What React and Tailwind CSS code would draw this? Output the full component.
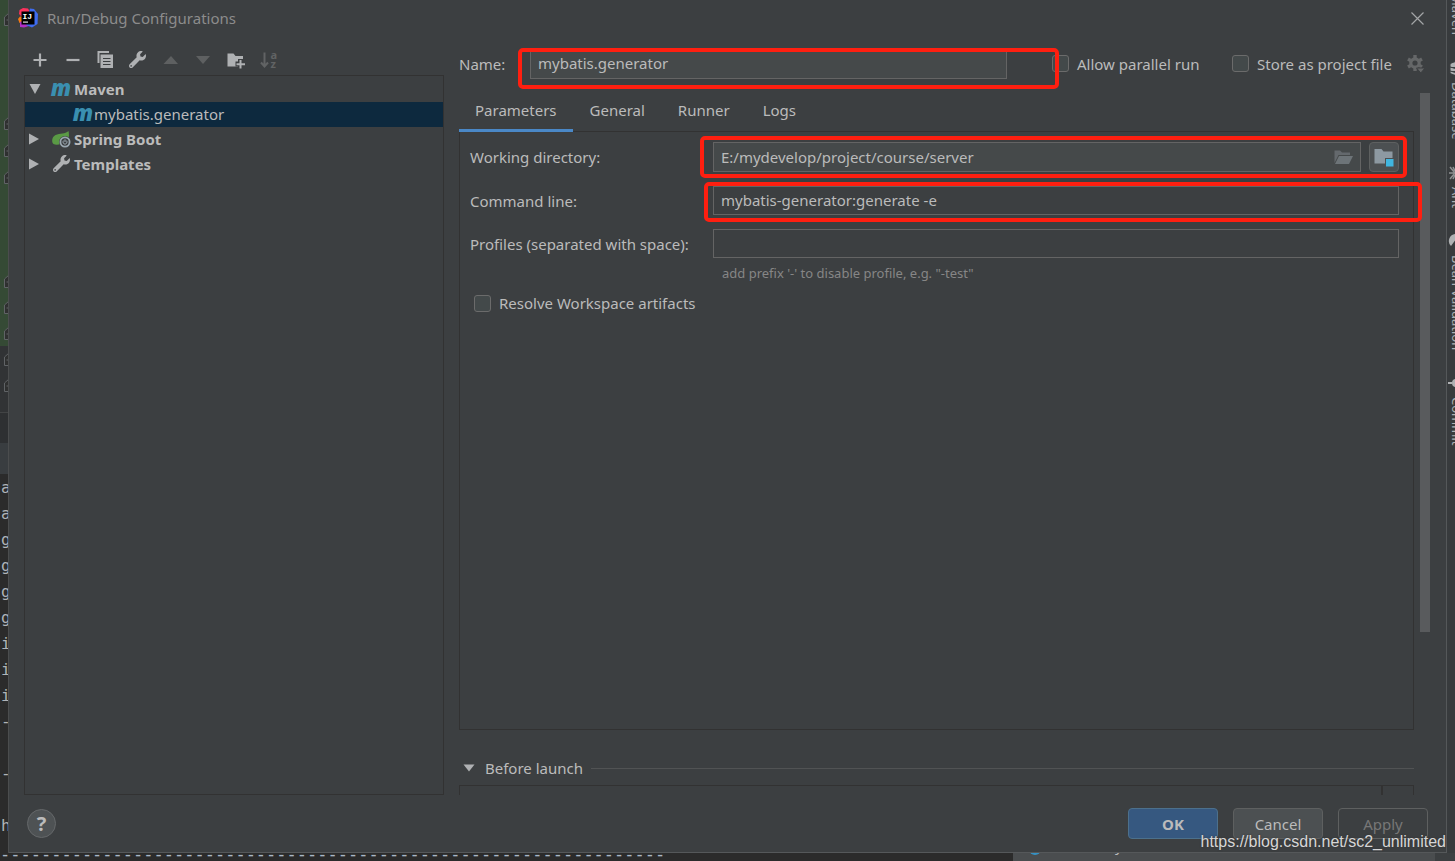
import React, { useState } from "react";
import { FaWrench } from "react-icons/fa";

const consoleLines = ["a", "a", "g", "g", "g", "g", "i", "i", "i", "-", "", "-", "", "h"];
const foldMarks = [13, 117, 144, 171, 275, 301, 327, 353, 379];
const tabs = ["Parameters", "General", "Runner", "Logs"];

function AppLogo() {
  return (
    <svg width="20" height="20" viewBox="0 0 20 20" aria-hidden="true">
      <path d="M1.500 2L5 0L10 0.500L12 4L10 8L4 9L1 6Z" fill="#fe315d" />
      <path d="M0 11L2 8.500L5 9L6 14L1.500 15Z" fill="#f97a12" />
      <path d="M2 14L10 11L11 18L6 19.500L2 19Z" fill="#b02fc4" />
      <path d="M12 0.500L16 1L20 6L19.500 16L14 19.500L8 17L11 4Z" fill="#3f6cf0" />
      <rect x="3.500" y="3.500" width="13" height="13" fill="#000" />
      <text x="4.500" y="10.500" fill="#fff" fontSize="8" fontWeight="700" fontFamily="Liberation Mono, monospace">IJ</text>
      <rect x="5" y="13.500" width="5" height="1.200" fill="#ddd" />
    </svg>
  );
}

function MavenIcon() {
  return (
    <span aria-hidden="true" className="flex h-5 w-5 items-center justify-center pb-1 font-['Open_Sans',sans-serif] text-[22px] leading-4 font-extrabold text-[#3a8fb0] italic">
      m
    </span>
  );
}

function SpringIcon() {
  return (
    <svg width="20" height="18" viewBox="0 0 20 18" aria-hidden="true">
      <path d="M17.500 1C18.500 6 18 9 15 11C10 15 5 15.500 2.500 14C0.500 12.500 0.500 7 4.500 5C9 3 14 4.500 17.500 1Z" fill="#5a9a45" />
      <circle cx="14" cy="12" r="6" fill="#3c3f41" />
      <circle cx="14" cy="12" r="4.600" fill="none" stroke="#9aa7b0" strokeWidth="1.800" />
      <path d="M12.800 10.500A2 2 0 1 0 15.200 10.500M14 9.300V12" fill="none" stroke="#9aa7b0" strokeWidth="1" />
    </svg>
  );
}

const toolbar = [
  { label: "Add", icon: <path d="M9 2.500V15.500M2.500 9H15.500" stroke="#afb1b3" strokeWidth="2.200" /> },
  { label: "Remove", icon: <path d="M2.500 9H15.500" stroke="#afb1b3" strokeWidth="2.200" /> },
  {
    label: "Copy",
    icon: (
      <>
        <path d="M1.500 12V1H12" fill="none" stroke="#afb1b3" strokeWidth="2" />
        <rect x="3.500" y="3.500" width="12.500" height="13.500" fill="#afb1b3" />
        <path d="M6 7.500H13.500M6 10.500H13.500M6 13.500H13.500" stroke="#3c3f41" strokeWidth="1.200" />
      </>
    ),
  },
  { label: "Edit templates", icon: <FaWrench size={17} color="#afb1b3" /> },
  { label: "Move up", icon: <path d="M1.500 13L9 5L16 13Z" fill="#5e6061" /> },
  { label: "Move down", icon: <path d="M2 5H16L9 13Z" fill="#5e6061" /> },
  {
    label: "Create folder",
    icon: (
      <>
        <path d="M0.500 2.500H6.500L8.500 5H16V15.500H0.500Z" fill="#afb1b3" />
        <path d="M13.500 8V18M8.500 13H18" stroke="#3c3f41" strokeWidth="5" />
        <path d="M13.500 9V17.500M9.500 13.200H18" stroke="#afb1b3" strokeWidth="2" />
      </>
    ),
  },
  {
    label: "Sort configurations",
    icon: (
      <>
        <path d="M4.500 1.500V15M1 11.500L4.500 15.500L8 11.500" fill="none" stroke="#616364" strokeWidth="2" />
        <text x="10.500" y="7.500" fontSize="11" fontWeight="700" fill="#616364">
          a<tspan x="10.500" dy="9.500">z</tspan>
        </text>
      </>
    ),
  },
];

function ToolButton({ label, icon }) {
  return (
    <button type="button" aria-label={label} className="flex h-6 items-center justify-center">
      <svg width="18" height="18" viewBox="0 0 18 18" overflow="visible" aria-hidden="true">{icon}</svg>
    </button>
  );
}

function Arrow({ open }) {
  return (
    <svg width="12" height="12" viewBox="0 0 12 12" aria-hidden="true">
      <path d={open ? "M0.500 1H11.500L6 11Z" : "M0 0.500L10 6L0 11.500Z"} fill="#afb1b3" />
    </svg>
  );
}

function TreeRow({ open, icon, children }) {
  return (
    <li className="flex h-[25px] items-center pb-[2px] pl-1 font-bold">
      <Arrow open={open} />
      <span className="ml-2 flex w-6 items-center justify-center">{icon}</span>
      <span className="ml-px">{children}</span>
    </li>
  );
}

function Check({ id, labelWidth = "", children }) {
  return (
    <div className="flex shrink-0 items-center gap-2">
      <input id={id} type="checkbox" className="h-[17px] w-[17px] appearance-none rounded-[3px] border border-[#6b6b6b] bg-[#43494a] checked:bg-[#4a88c7]" />
      <label htmlFor={id} className={labelWidth}>{children}</label>
    </div>
  );
}

function LeftEdge() {
  return (
    <div className="flex w-[9px] shrink-0 flex-col overflow-hidden border-r border-[#4b4d4e]">
      <div className="h-[413px] shrink-0 bg-[#313335]">
        <svg width="9" height="413" viewBox="0 0 9 413" aria-hidden="true">
          <rect width="9" height="346" fill="#354a35" />
          {foldMarks.map((y) => (
            <path key={y} d={`M9 ${y}L4.500 ${y + 4}V${y + 12.5}H9M6.500 ${y + 7}H9`} fill="#2f3030" stroke="#606366" />
          ))}
          <path d="M0 412.500H9" stroke="#424445" />
        </svg>
      </div>
      <div className="h-[30px] shrink-0 bg-[#2e3032]" />
      <div className="h-8 shrink-0 border-b border-[#2b2b2b] bg-[#393d40]" />
      <div className="flex-1 bg-[#2b2b2b] pl-px font-['DejaVu_Sans_Mono',monospace] text-[16px] leading-[26px] text-[#b0b4b8]">
        {consoleLines.map((c, i) => (
          <div key={i} className="h-[26px]">{c}</div>
        ))}
      </div>
    </div>
  );
}

const sideTools = [
  { name: "Maven", icon: null },
  { name: "Database", icon: <path d="M2 3C6 0 10 0 14 3V12C10 15 6 15 2 12ZM2 6Q8 9 14 6M2 10Q8 13 14 10" fill="#afb1b3" stroke="#3c3f41" /> },
  { name: "Ant", icon: <path d="M2 1L7 7L2 13M1 7H8M5 1L7 5M5 13L7 9" fill="none" stroke="#8f9193" strokeWidth="1.500" /> },
  { name: "Bean Validation", icon: <path d="M8 0A7 7 0 0 0 3 12L8 5Z" fill="#afb1b3" /> },
  { name: "Commit", icon: <path d="M0 7H4M8 4A3 3 0 0 0 8 10Z" fill="#afb1b3" stroke="#afb1b3" strokeWidth="2" /> },
];

function RightEdge() {
  return (
    <div className="flex w-2 shrink-0 flex-col gap-[26px] overflow-hidden bg-[#383b3d] text-[13px] leading-5 text-[#afb1b3]">
      {sideTools.map((t, i) => (
        <div key={t.name} className={i === 0 ? "-mt-[6px] shrink-0" : "flex shrink-0 flex-col items-start gap-[7px]"}>
          {t.icon && <svg className="ml-px shrink-0" width="14" height="14" viewBox="0 0 14 14" aria-hidden="true">{t.icon}</svg>}
          <span className="block [writing-mode:vertical-rl]">{t.name}</span>
        </div>
      ))}
    </div>
  );
}

const field = "w-full min-w-0 border border-[#646464] px-[7px] pb-[2px] text-[#bbbbbb] outline-none";
const highlight = "pointer-events-none absolute rounded-[5px] border-4 border-[#ff1f10]";

export default function App() {
  const [tab, setTab] = useState("Parameters");
  return (
    <div className="relative flex h-screen flex-col overflow-hidden bg-[#2b2b2b] font-['Noto_Sans','Open_Sans',sans-serif] text-[15px] leading-5 text-[#bbbbbb]">
      <div className="flex min-h-0 flex-1">
        <LeftEdge />
        <main className="flex min-w-0 flex-1 flex-col border-r border-b border-[#55585a] bg-[#3c3f41]">
          <header className="flex h-9 shrink-0 items-center pr-[22px] pl-[9px]">
            <AppLogo />
            <h1 className="ml-[9px] flex-1 text-[#8c8c8c]">Run/Debug Configurations</h1>
            <button type="button" aria-label="Close">
              <svg width="13" height="13" viewBox="0 0 13 13" aria-hidden="true">
                <path d="M0.500 0.500L12.500 12.500M12.500 0.500L0.500 12.500" stroke="#a3a5a6" strokeWidth="1.200" />
              </svg>
            </button>
          </header>

          <div className="flex min-h-0 flex-1 pr-4 pl-[15px]">
            <aside className="flex w-[420px] shrink-0 flex-col pt-3">
              <div className="grid h-[27px] w-[261px] shrink-0 grid-cols-8">
                {toolbar.map((t) => <ToolButton key={t.label} {...t} />)}
              </div>
              <ul className="flex-1 border border-[#323232] pt-px">
                <TreeRow open icon={<MavenIcon />}>Maven</TreeRow>
                <li className="flex h-[25px] items-center bg-[#0d293e] pb-[2px] pl-12">
                  <MavenIcon />
                  <span className="ml-px">mybatis.generator</span>
                </li>
                <TreeRow icon={<SpringIcon />}>Spring Boot</TreeRow>
                <TreeRow icon={<FaWrench size={17} color="#afb1b3" />}>Templates</TreeRow>
              </ul>
            </aside>

            <section className="ml-[15px] flex min-w-0 flex-1 flex-col">
              <div className="flex h-[55px] shrink-0 items-center pr-[5px]">
                <label htmlFor="name" className="w-[71px] shrink-0">Name:</label>
                <div className="relative mr-[45px] flex-1">
                  <input id="name" defaultValue="mybatis.generator" className={`${field} h-[30px] bg-[#45494a]`} />
                  <div className={`${highlight} -top-px -right-[52px] -bottom-[10px] -left-3`} />
                </div>
                <Check id="parallel" labelWidth="w-[127px]">Allow parallel run</Check>
                <div className="ml-7 flex shrink-0 items-center gap-2">
                  <Check id="store" labelWidth="w-[142px]">Store as project file</Check>
                  <button type="button" aria-label="Storage options">
                    <svg width="18" height="18" viewBox="0 0 18 18" aria-hidden="true">
                      <circle cx="8" cy="8" r="4.200" fill="none" stroke="#656768" strokeWidth="3.200" />
                      <path d="M8 0V3M8 13V16M1 4L3.600 5.500M12.400 10.500L15 12M1 12L3.600 10.500M12.400 5.500L15 4" stroke="#656768" strokeWidth="3.400" />
                      <path d="M9.500 13H18L13.800 18Z" fill="#656768" stroke="#3c3f41" />
                    </svg>
                  </button>
                </div>
              </div>

              <div className="flex min-h-0 flex-1">
                <div className="flex min-w-0 flex-1 flex-col">
                  <div role="tablist" className="flex h-10 shrink-0 gap-px">
                    {tabs.map((t) => (
                      <button
                        key={t}
                        type="button"
                        role="tab"
                        aria-selected={tab === t}
                        onClick={() => setTab(t)}
                        className={tab === t ? "z-10 -mb-px border-b-[3px] border-[#4a88c7] px-4" : "border-b-2 border-transparent px-4"}
                      >
                        {t}
                      </button>
                    ))}
                  </div>
                  <div role="tabpanel" className="min-h-0 flex-1 border border-[#323232] pt-[10px] pr-[14px] pl-[10px]">
                    <div className="grid grid-cols-[243px_1fr] items-center gap-y-[14px]">
                      <label htmlFor="dir">Working directory:</label>
                      <div className="relative flex gap-2">
                        <div className="flex h-[30px] min-w-0 flex-1 items-center border border-[#646464] bg-[#45494a] pr-[7px]">
                          <input id="dir" defaultValue="E:/mydevelop/project/course/server" className="min-w-0 flex-1 bg-transparent px-[7px] text-[#bbbbbb] outline-none" />
                          <button type="button" aria-label="Browse">
                            <svg width="19" height="14" viewBox="0 0 19 14" aria-hidden="true">
                              <path d="M0.500 13V0.500H6L8 2.500H16V5H4.500Z" fill="#64696d" />
                              <path d="M5 6H19L15 14H1Z" fill="#6d7478" />
                            </svg>
                          </button>
                        </div>
                        <button type="button" aria-label="Select module directory" className="flex h-[30px] w-[30px] items-center justify-center rounded-[4px] border border-[#5e6060] bg-[#4c5052]">
                          <svg width="20" height="19" viewBox="0 0 20 19" aria-hidden="true">
                            <path d="M0.500 1H7.500L9.500 3.500H18.500V10H11V15.500H0.500Z" fill="#8d99a2" />
                            <rect x="12" y="11" width="7.500" height="7.500" fill="#40b6e0" />
                          </svg>
                        </button>
                        <div className={`${highlight} -top-[6px] -right-2 -bottom-[6px] -left-[13px]`} />
                      </div>
                      <label htmlFor="cmd">Command line:</label>
                      <div className="relative">
                        <input id="cmd" defaultValue="mybatis-generator:generate -e" className={`${field} h-[29px] bg-transparent`} />
                        <div className={`${highlight} -top-1 -right-[23px] -bottom-[7px] -left-[9px] z-10`} />
                      </div>
                      <label htmlFor="profiles">Profiles (separated with space):</label>
                      <input id="profiles" className={`${field} h-[29px] bg-transparent`} />
                    </div>
                    <p className="mt-[5px] pl-[252px] text-[13px] text-[#868686]">add prefix &#39;-&#39; to disable profile, e.g. &quot;-test&quot;</p>
                    <div className="mt-[10px] pl-1">
                      <Check id="resolve">Resolve Workspace artifacts</Check>
                    </div>
                  </div>
                  <div className="mt-7 flex shrink-0 items-center pl-1">
                    <svg width="12" height="8" viewBox="0 0 12 8" aria-hidden="true">
                      <path d="M0.500 0.500H11.500L6 7.500Z" fill="#afb1b3" />
                    </svg>
                    <h2 className="mr-2 ml-[10px]">Before launch</h2>
                    <div className="h-px flex-1 bg-[#515354]" />
                  </div>
                  <div className="mt-[7px] flex h-[10px] shrink-0 justify-end border border-b-0 border-[#323232]">
                    <div className="w-8 border-l-2 border-[#323232]" />
                  </div>
                </div>
                <div className="w-4 shrink-0 pt-[2px] pl-[6px]">
                  <div className="h-[539px] w-[10px] bg-[#595b5d]" />
                </div>
              </div>
            </section>
          </div>

          <footer className="flex h-[57px] shrink-0 items-center gap-[15px] pr-[18px] pl-[18px]">
            <button type="button" aria-label="Help" className="mr-auto flex h-[29px] w-[29px] items-center justify-center rounded-full border border-[#65686a] bg-[#4e5254] text-[20px] font-bold">?</button>
            <button type="button" className="h-[31px] w-[90px] rounded-[4px] border border-[#4c708c] bg-[#365880] font-bold">OK</button>
            <button type="button" className="h-[31px] w-[90px] rounded-[4px] border border-[#5e6060] bg-[#4c5052]">Cancel</button>
            <button type="button" disabled className="h-[31px] w-[90px] rounded-[4px] border border-[#5e6060] text-[#777777]">Apply</button>
          </footer>
        </main>
        <RightEdge />
      </div>

      <div className="flex h-2 shrink-0 overflow-hidden">
        <div className="flex h-2 min-w-0 flex-1 items-center overflow-hidden pb-[6px] font-['DejaVu_Sans_Mono',monospace] text-[17px] whitespace-nowrap text-[#a9b7c6]">
          {"-".repeat(65)}
        </div>
        <div className="flex w-[422px] shrink-0 items-end overflow-hidden bg-[#4a4d4f] pb-[6px] pl-4">
          <span className="h-3 w-3 rounded-full bg-[#3592c4]" />
          <span className="ml-[74px]">y</span>
        </div>
        <div className="w-5 shrink-0 bg-[#3c3f41]" />
      </div>

      <div className="pointer-events-none absolute right-[9px] bottom-[9px] z-20 font-['Liberation_Sans',sans-serif] text-[16px] text-[#d6d6d6] [text-shadow:0_0_2px_#333]">
        https://blog.csdn.net/sc2_unlimited
      </div>
    </div>
  );
}
